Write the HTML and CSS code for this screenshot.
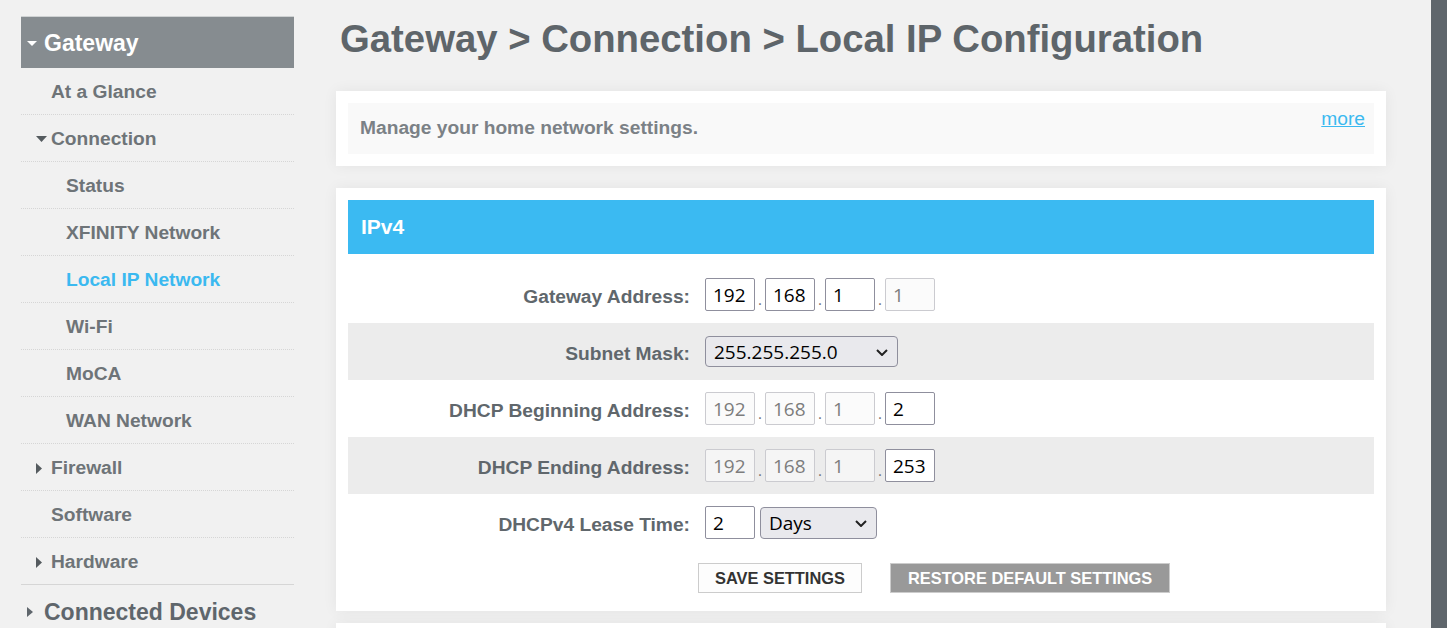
FILE: index.html
```html
<!DOCTYPE html>
<html lang="en">
<head>
<meta charset="UTF-8">
<meta name="viewport" content="width=device-width, initial-scale=1.0">
<title>Gateway &gt; Connection &gt; Local IP Configuration</title>
<link rel="stylesheet" href="styles.css">
</head>
<body>

<div class="page">

  <!-- left navigation -->
  <nav class="sidebar">
    <div class="nav-top open">
      <span class="caret"><svg width="10" height="5" viewBox="0 0 10 5"><polygon points="0,0 10,0 5,5" fill="#fff"/></svg></span>
      Gateway
    </div>
    <ul class="nav-list">
      <li class="l1">At a Glance</li>
      <li class="l1"><span class="caret"><svg width="11" height="6" viewBox="0 0 11 6"><polygon points="0,0 11,0 5.5,6" fill="#555b5f"/></svg></span>Connection</li>
      <li class="l2">Status</li>
      <li class="l2">XFINITY Network</li>
      <li class="l2 active">Local IP Network</li>
      <li class="l2">Wi-Fi</li>
      <li class="l2">MoCA</li>
      <li class="l2">WAN Network</li>
      <li class="l1"><span class="caret"><svg width="6" height="11" viewBox="0 0 6 11"><polygon points="0,0 6,5.5 0,11" fill="#555b5f"/></svg></span>Firewall</li>
      <li class="l1">Software</li>
      <li class="l1 last"><span class="caret"><svg width="6" height="11" viewBox="0 0 6 11"><polygon points="0,0 6,5.5 0,11" fill="#555b5f"/></svg></span>Hardware</li>
    </ul>
    <div class="nav-top closed">
      <span class="caret"><svg width="6" height="10" viewBox="0 0 6 10"><polygon points="0,0 6,5 0,10" fill="#5f666c"/></svg></span>
      Connected Devices
    </div>
  </nav>

  <main class="content">
    <h1>Gateway &gt; Connection &gt; Local IP Configuration</h1>

    <section class="card">
      <div class="intro">
        <p>Manage your home network settings.</p>
        <a href="#" class="more">more</a>
      </div>
    </section>

    <section class="card">
      <div class="card-head">IPv4</div>

      <div class="row">
        <label class="field-label">Gateway Address:</label>
        <div class="controls">
          <input class="octet" type="text" value="192">
          <span class="dot">.</span>
          <input class="octet" type="text" value="168">
          <span class="dot">.</span>
          <input class="octet" type="text" value="1">
          <span class="dot">.</span>
          <input class="octet" type="text" value="1" disabled>
        </div>
      </div>

      <div class="row odd">
        <label class="field-label">Subnet Mask:</label>
        <div class="controls">
          <span class="select-wrap mask">
            <select>
              <option>255.255.255.0</option>
            </select>
            <svg class="chevron" width="12" height="7" viewBox="0 0 12 7"><path d="M1 1 L6 6 L11 1" fill="none" stroke="#222" stroke-width="2"/></svg>
          </span>
        </div>
      </div>

      <div class="row">
        <label class="field-label">DHCP Beginning Address:</label>
        <div class="controls">
          <input class="octet" type="text" value="192" disabled>
          <span class="dot">.</span>
          <input class="octet" type="text" value="168" disabled>
          <span class="dot">.</span>
          <input class="octet" type="text" value="1" disabled>
          <span class="dot">.</span>
          <input class="octet" type="text" value="2">
        </div>
      </div>

      <div class="row odd">
        <label class="field-label">DHCP Ending Address:</label>
        <div class="controls">
          <input class="octet" type="text" value="192" disabled>
          <span class="dot">.</span>
          <input class="octet" type="text" value="168" disabled>
          <span class="dot">.</span>
          <input class="octet" type="text" value="1" disabled>
          <span class="dot">.</span>
          <input class="octet" type="text" value="253">
        </div>
      </div>

      <div class="row">
        <label class="field-label">DHCPv4 Lease Time:</label>
        <div class="controls">
          <input class="octet" type="text" value="2">
          <span class="select-wrap days">
            <select>
              <option>Days</option>
            </select>
            <svg class="chevron" width="12" height="7" viewBox="0 0 12 7"><path d="M1 1 L6 6 L11 1" fill="none" stroke="#222" stroke-width="2"/></svg>
          </span>
        </div>
      </div>

      <div class="buttons">
        <button class="btn">SAVE SETTINGS</button>
        <button class="btn btn-gray">RESTORE DEFAULT SETTINGS</button>
      </div>
    </section>

    <section class="card next"></section>
  </main>

</div>

<div class="edge"></div>

</body>
</html>
```

FILE: styles.css
```css
body {
  margin: 0;
  height: 100vh;
  overflow: hidden;
  display: flex;
  background-color: #f1f1f1;
  font-family: "Liberation Sans", Arial, sans-serif;
}

.page {
  flex: 1;
  display: flex;
  align-items: flex-start;
}

.edge {
  width: 16px;
  background-color: #5f666c;
}

/* ---- sidebar ---- */
.sidebar {
  width: 273px;
  margin-left: 21px;
  margin-top: 16px;
}

.nav-top {
  display: flex;
  align-items: center;
  height: 52px;
  padding-left: 6px;
  padding-top: 2px;
  box-sizing: border-box;
  font-size: 23px;
  font-weight: bold;
}
.nav-top.open {
  background-color: #868c90;
  border-top: 1px solid #cfd2d3;
  color: #fff;
}
.nav-top.closed {
  color: #5f666c;
}
.nav-top .caret {
  width: 17px;
  display: flex;
  align-items: center;
}

.nav-list {
  list-style: none;
  margin: 0;
  padding: 0;
}
.nav-list li {
  display: flex;
  align-items: center;
  height: 47px;
  box-sizing: border-box;
  padding-top: 2px;
  border-bottom: 1px dotted #d6d6d6;
  font-size: 19.2px;
  font-weight: bold;
  color: #6e7478;
}
.nav-list li.l1 {
  padding-left: 30px;
}
.nav-list li.l1 .caret {
  width: 15px;
  margin-left: -15px;
  display: flex;
  align-items: center;
}
.nav-list li.l2 {
  padding-left: 45px;
}
.nav-list li.active {
  color: #3bb9f0;
}
.nav-list li.last {
  border-bottom: 1px solid #d6d6d6;
}

/* ---- main column ---- */
.content {
  width: 1050px;
  margin-left: 42px;
}

.content h1 {
  margin: 17px 0 30px 4px;
  font-size: 38.3px;
  line-height: 44px;
  color: #5e656a;
}

.card {
  background-color: #fff;
  padding: 12px;
  margin-bottom: 22px;
  box-shadow: 0 0 14px rgba(0, 0, 0, 0.06);
}
.card.next {
  height: 40px;
  margin-top: -10px;
}

.intro {
  display: flex;
  justify-content: space-between;
  align-items: flex-start;
  height: 51px;
  box-sizing: border-box;
  padding: 5px 9px 0 12px;
  background-color: #f9f9f9;
}
.intro p {
  margin: 9px 0 0;
  line-height: 22px;
  font-size: 19.2px;
  font-weight: bold;
  color: #7b8186;
}
.intro .more {
  line-height: 22px;
  font-size: 19.2px;
  color: #3bb9f0;
}

.card-head {
  height: 54px;
  display: flex;
  align-items: center;
  padding-left: 13px;
  margin-bottom: 12px;
  background-color: #3bbaf2;
  color: #fff;
  font-size: 21px;
  font-weight: bold;
}

/* ---- form rows ---- */
.row {
  display: flex;
  align-items: center;
  height: 57px;
}
.row.odd {
  background-color: #ececec;
}

.field-label {
  width: 342px;
  padding-top: 4px;
  text-align: right;
  font-size: 19.2px;
  font-weight: bold;
  color: #60676c;
}

.controls {
  display: flex;
  align-items: center;
  margin-left: 15px;
}

.octet {
  width: 50px;
  height: 33px;
  box-sizing: border-box;
  padding: 0 0 0 7px;
  border: 1px solid #8f8f9d;
  border-radius: 2px;
  background-color: #fff;
  font-family: "Open Sans", sans-serif;
  font-size: 19px;
  color: #000;
}
.octet:disabled {
  border-color: #cbcbd0;
  background-color: rgba(250, 250, 250, 0.7);
  color: #7d7d7d;
}

.dot {
  width: 10px;
  align-self: flex-end;
  padding-bottom: 3px;
  text-align: center;
  font-size: 16px;
  line-height: 1;
  color: #777;
}

.select-wrap {
  position: relative;
  display: inline-block;
}
.select-wrap select {
  appearance: none;
  -webkit-appearance: none;
  box-sizing: border-box;
  padding: 0 0 0 8px;
  border: 1px solid #8f8f9d;
  border-radius: 4px;
  background-color: #e9e9ed;
  font-family: "Open Sans", sans-serif;
  font-size: 19px;
  color: #000;
}
.select-wrap .chevron {
  position: absolute;
  right: 10px;
  top: 50%;
  margin-top: -3px;
}
.mask select {
  width: 193px;
  height: 31px;
}
.days {
  margin-left: 5px;
}
.days select {
  width: 117px;
  height: 32px;
}

/* ---- buttons ---- */
.buttons {
  display: flex;
  gap: 28px;
  padding: 12px 0 6px 350px;
}
.btn {
  height: 30px;
  padding: 0 16px;
  border: 1px solid #cccccc;
  background-color: #fdfdfd;
  font-family: "Liberation Sans", Arial, sans-serif;
  font-size: 16.4px;
  font-weight: bold;
  color: #333;
}
.btn-gray {
  padding: 0 17px;
  background-color: #999999;
  color: #fff;
}
```
